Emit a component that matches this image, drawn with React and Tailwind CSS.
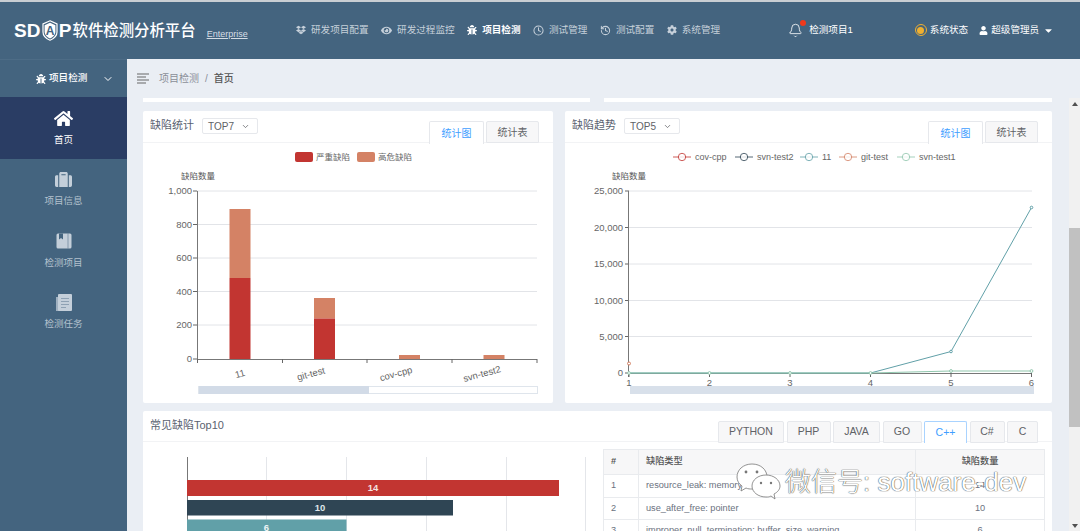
import React from "react";
import { FaBug, FaCaretDown, FaCog, FaDropbox, FaEye, FaHome, FaSuitcase, FaUser } from "react-icons/fa";
import { Bell, ChevronDown, Clock, History } from "lucide-react";

const navItems = [
  { label: "研发项目配置", icon: <FaDropbox size={10} /> },
  { label: "研发过程监控", icon: <FaEye size={11} /> },
  { label: "项目检测", icon: <FaBug size={10} />, active: true },
  { label: "测试管理", icon: <Clock size={11} strokeWidth={2.2} /> },
  { label: "测试配置", icon: <History size={11} strokeWidth={2.2} /> },
  { label: "系统管理", icon: <FaCog size={10} /> },
];

const BookIcon = () => (
  <svg width="16" height="16" viewBox="0 0 16 16">
    <rect x="0.5" y="0.5" width="15" height="15" rx="1.5" fill="#c4cfda" />
    <path d="M3 0.5h4v6l-2-1.5-2 1.5z" fill="#44647f" />
    <rect x="11.5" y="0.5" width="1" height="15" fill="#44647f" opacity="0.5" />
  </svg>
);

const DocIcon = () => (
  <svg width="16" height="17" viewBox="0 0 16 17">
    <rect x="0" y="3" width="3" height="14" fill="#9fb0c0" />
    <rect x="2" y="0" width="14" height="17" rx="1" fill="#c4cfda" />
    <path d="M5 4.5h8M5 7.5h8M5 10.5h8M5 13.5h5" stroke="#8ea1b3" strokeWidth="1" />
  </svg>
);

const sideItems = [
  { label: "首页", icon: <FaHome size={19} />, active: true },
  { label: "项目信息", icon: <FaSuitcase size={17} /> },
  { label: "检测项目", icon: <BookIcon /> },
  { label: "检测任务", icon: <DocIcon /> },
];

function Logo() {
  return (
    <div className="flex items-center text-white">
      <span className="text-[19px] font-bold tracking-[0.2px] leading-none">SD</span>
      <svg width="16" height="21" viewBox="0 0 16 21" className="mx-[1px]">
        <path d="M8 0.8 L15 4 V12 C15 16 11 19 8 20.2 C5 19 1 16 1 12 V4 Z" fill="none" stroke="#fff" strokeWidth="1.2" />
        <path d="M8 2.8 L13.4 5.2 V12 C13.4 15 10.5 17.4 8 18.4 C5.5 17.4 2.6 15 2.6 12 V5.2 Z" fill="#fff" />
        <text x="8" y="15" textAnchor="middle" fontSize="12" fontWeight="700" fill="#44647f">A</text>
      </svg>
      <span className="text-[19px] font-bold leading-none">P</span>
      <span className="ml-[1px] text-[15.4px] font-medium leading-none">软件检测分析平台</span>
      <span className="ml-[11px] mt-[8px] text-[9px] leading-none underline text-[#d5dde5]">Enterprise</span>
    </div>
  );
}

function Header() {
  return (
    <div className="h-[57px] shrink-0 bg-[#44647f] flex items-center pl-[14px]">
      <div className="w-[282px] shrink-0">
        <Logo />
      </div>
      <div className="flex items-center gap-[12.5px]">
        {navItems.map((item) => (
          <div
            key={item.label}
            className={`flex items-center gap-[5px] text-[9.6px] ${item.active ? "text-white font-bold" : "text-[#c6d0da]"}`}
          >
            {item.icon}
            <span>{item.label}</span>
          </div>
        ))}
      </div>
      <div className="ml-[68px] relative flex items-center">
        <Bell size={15} strokeWidth={1.3} className="text-white" />
        <span className="absolute -top-[3px] left-[12px] w-[6px] h-[6px] rounded-full bg-[#f0391c]" />
        <span className="ml-[6px] text-[9.6px] text-white">检测项目1</span>
      </div>
      <div className="ml-[62px] flex items-center text-[9.6px] text-white">
        <span className="w-[12px] h-[12px] rounded-full border border-[#f0b030] flex items-center justify-center mr-[3px]">
          <span className="w-[7px] h-[7px] rounded-full bg-[#f0b030]" />
        </span>
        系统状态
        <FaUser size={9} className="ml-[11px] mr-[3px]" />
        超级管理员
        <FaCaretDown size={11} className="ml-[4px]" />
      </div>
    </div>
  );
}

function Sidebar() {
  return (
    <div className="w-[127px] shrink-0 bg-[#44647f] flex flex-col">
      <div className="h-[38px] flex items-center pl-[36px] text-white text-[9.6px] font-medium border-t border-[#4d6c86]">
        <FaBug size={10} className="mr-[3px]" />
        项目检测
        <ChevronDown size={12} className="ml-[15px]" />
      </div>
      {sideItems.map((item) => (
        <div
          key={item.label}
          className={`h-[61.5px] flex flex-col items-center justify-center gap-[5px] text-[9.5px] ${
            item.active ? "bg-[#2a3d64] text-white" : "text-[#b3c1ce]"
          }`}
        >
          <div className={`h-[19px] flex items-center ${item.active ? "text-white" : "text-[#c4cfda]"}`}>{item.icon}</div>
          <span>{item.label}</span>
        </div>
      ))}
    </div>
  );
}

function CardHeader({ title, top }) {
  return (
    <div className="h-[32px] flex items-start pl-[7px] pr-[14px] border-b border-[#f2f3f5]">
      <span className="mt-[6px] text-[11px] leading-[16px] text-[#5a6270]">{title}</span>
      {top && (
        <div className="mt-[7px] ml-[8px] w-[56px] h-[16px] border border-[#e6e8ec] rounded-[2px] flex items-center justify-between pl-[5px] pr-[7px] text-[10px] text-[#606266]">
          {top}
          <ChevronDown size={9} />
        </div>
      )}
      <div className="ml-auto mt-[10px] flex gap-[2px] text-[10px]">
        <div className="w-[55px] h-[23px] flex items-center justify-center bg-white border border-b-0 border-[#e6e8ec] rounded-t-[2px] text-[#409eff]">
          统计图
        </div>
        <div className="w-[53px] h-[22px] flex items-center justify-center bg-[#f7f7f8] border border-[#e6e8ec] rounded-t-[2px] text-[#606266]">
          统计表
        </div>
      </div>
    </div>
  );
}

const barGrid = [
  [192, "1,000"],
  [225.5, "800"],
  [259, "600"],
  [292.5, "400"],
  [326, "200"],
  [360, "0"],
];

const barData = [
  { x: 229.5, top: 210, split: 279 },
  { x: 314, top: 299, split: 319.5 },
  { x: 399, top: 356, split: 360 },
  { x: 483.5, top: 356, split: 360 },
];

const barLabels = [
  [240, "11"],
  [311, "git-test"],
  [396, "cov-cpp"],
  [482, "svn-test2"],
];

function BarChart() {
  return (
    <svg width="410" height="259" viewBox="143 144 410 259" className="block" fontFamily="Liberation Sans, Noto Sans CJK SC, sans-serif">
      <rect x="295" y="153" width="18" height="10" rx="2" fill="#c23531" />
      <text x="316" y="161" fontSize="8.5" fill="#666">严重缺陷</text>
      <rect x="357" y="153" width="18" height="10" rx="2" fill="#d48265" />
      <text x="378" y="161" fontSize="8.5" fill="#666">高危缺陷</text>
      <text x="181" y="180" fontSize="8.5" fill="#555">缺陷数量</text>
      {barGrid.map(([y, label]) => (
        <g key={label}>
          {label !== "0" && <line x1="197" x2="537" y1={y} y2={y} stroke="#e2e4e8" />}
          <line x1="193" x2="197" y1={y} y2={y} stroke="#666" />
          <text x="192" y={y + 3} textAnchor="end" fontSize="9.5" fill="#666">{label}</text>
        </g>
      ))}
      {barData.map((b) => (
        <g key={b.x}>
          <rect x={b.x} y={b.top} width="21" height={b.split - b.top} fill="#d48265" />
          <rect x={b.x} y={b.split} width="21" height={360 - b.split} fill="#c23531" />
        </g>
      ))}
      <line x1="197.5" x2="197.5" y1="192" y2="363" stroke="#777" />
      <line x1="197" x2="537" y1="360.5" y2="360.5" stroke="#777" />
      {[197.5, 282.5, 367, 452, 537].map((x) => (
        <line key={x} x1={x} x2={x} y1="360" y2="364" stroke="#666" />
      ))}
      {barLabels.map(([x, label]) => (
        <text key={label} x={x} y="378" textAnchor="middle" fontSize="9.5" fill="#666" transform={`rotate(-15 ${x} 375)`}>{label}</text>
      ))}
      <rect x="198.5" y="387.5" width="339" height="7" fill="#fff" stroke="#dfe5ec" />
      <rect x="199" y="387" width="170" height="8" fill="#d2dbe7" />
    </svg>
  );
}

const lineGrid = [
  [192, "25,000"],
  [228.5, "20,000"],
  [265, "15,000"],
  [301.5, "10,000"],
  [337.5, "5,000"],
  [374, "0"],
];

const lineXs = [629, 709.5, 790, 870.5, 951, 1031.5];

const legend = [
  [673, "#c23531", "cov-cpp"],
  [735, "#2f4554", "svn-test2"],
  [800, "#61a0a8", "11"],
  [839, "#d48265", "git-test"],
  [897, "#91c7ae", "svn-test1"],
];

function LineChart() {
  return (
    <svg width="487" height="259" viewBox="565 144 487 259" className="block" fontFamily="Liberation Sans, Noto Sans CJK SC, sans-serif">
      {legend.map(([x, color, label]) => (
        <g key={label}>
          <line x1={x} x2={x + 18} y1="158" y2="158" stroke={color} opacity="0.8" />
          <circle cx={x + 9} cy="158" r="3.7" fill="#fff" stroke={color} opacity="0.8" />
          <text x={x + 22} y="161" fontSize="9" fill="#666">{label}</text>
        </g>
      ))}
      <text x="612" y="180" fontSize="8.5" fill="#555">缺陷数量</text>
      {lineGrid.map(([y, label]) => (
        <g key={label}>
          {label !== "0" && <line x1="629" x2="1032" y1={y} y2={y} stroke="#e2e4e8" />}
          <line x1="625" x2="629" y1={y} y2={y} stroke="#666" />
          <text x="623" y={y + 3} textAnchor="end" fontSize="9.5" fill="#666">{label}</text>
        </g>
      ))}
      <line x1="628.5" x2="628.5" y1="192" y2="378" stroke="#777" />
      <line x1="629" x2="1032" y1="374.5" y2="374.5" stroke="#777" />
      {lineXs.map((x, i) => (
        <g key={x}>
          <line x1={x} x2={x} y1="374" y2="378" stroke="#666" />
          <text x={x} y="387" textAnchor="middle" fontSize="9.5" fill="#666">{i + 1}</text>
        </g>
      ))}
      <polyline points="629,374 709.5,374 790,374 870.5,374 951,352.5 1031.5,208.5" fill="none" stroke="#61a0a8" strokeWidth="1" />
      <polyline points="629,374 709.5,374 790,374 870.5,374 951,372 1031.5,372" fill="none" stroke="#91c7ae" strokeWidth="1.2" />
      <circle cx="629" cy="364.5" r="1.5" fill="#fff" stroke="#d48265" />
      <circle cx="951" cy="352.5" r="1.3" fill="#fff" stroke="#61a0a8" />
      <circle cx="1031.5" cy="208.5" r="1.3" fill="#fff" stroke="#61a0a8" />
      {lineXs.map((x, i) => (
        <circle key={x} cx={x} cy={i > 3 ? 372 : 374} r="1.4" fill="#fff" stroke="#91c7ae" />
      ))}
      <rect x="630" y="387" width="404" height="8" fill="#d8e0ea" />
    </svg>
  );
}

function HBarChart() {
  return (
    <svg width="460" height="110" viewBox="143 442 460 110" className="block shrink-0" fontFamily="Liberation Sans, sans-serif">
      {[266.5, 346.5, 426.5, 506.5, 585.5].map((x) => (
        <line key={x} x1={x} x2={x} y1="457" y2="552" stroke="#e4e6ea" />
      ))}
      <line x1="187.5" x2="187.5" y1="457" y2="552" stroke="#777" />
      <rect x="187" y="480" width="372" height="16" fill="#c23531" />
      <text x="373" y="491" textAnchor="middle" fontSize="9.5" fontWeight="700" fill="#f3e3e2">14</text>
      <rect x="187" y="500" width="266" height="15.5" fill="#2f4554" />
      <text x="320" y="511" textAnchor="middle" fontSize="9.5" fontWeight="700" fill="#dfe5ea">10</text>
      <rect x="187" y="519.5" width="159.5" height="16" fill="#61a0a8" />
      <text x="266.5" y="530.5" textAnchor="middle" fontSize="9.5" fontWeight="700" fill="#eef5f6">6</text>
    </svg>
  );
}

const langTabs = [
  ["PYTHON", "w-[66px]"],
  ["PHP", "w-[44px]"],
  ["JAVA", "w-[47px]"],
  ["GO", "w-[39px]"],
  ["C++", "w-[43px]"],
  ["C#", "w-[35px]"],
  ["C", "w-[31px]"],
];

const rows = [
  ["1", "resource_leak: memory", "14"],
  ["2", "use_after_free: pointer", "10"],
  ["3", "improper_null_termination: buffer_size_warning", "6"],
];

function DefectCard() {
  return (
    <div className="bg-white rounded-t-[2px]">
      <div className="h-[31px] flex items-start pl-[7px] pr-[14px] border-b border-[#f2f3f5]">
        <span className="mt-[6px] text-[11px] leading-[16px] text-[#5a6270]">常见缺陷Top10</span>
        <div className="ml-auto mt-[10px] flex gap-[2.5px] text-[10.5px]">
          {langTabs.map(([label, width]) => (
            <div
              key={label}
              className={`${width} h-[22px] flex items-center justify-center border rounded-t-[2px] ${
                label === "C++" ? "bg-white border-[#a9d3ff] border-b-0 text-[#409eff]" : "bg-[#f7f7f8] border-[#e6e8ec] text-[#606266]"
              }`}
            >
              {label}
            </div>
          ))}
        </div>
      </div>
      <div className="flex">
        <HBarChart />
        <div className="w-[442px] pt-[7px]">
          <table className="w-full table-fixed border-collapse text-[9.2px] text-[#6b7280]">
            <colgroup>
              <col className="w-[35px]" />
              <col className="w-[277px]" />
              <col />
            </colgroup>
            <thead>
              <tr className="h-[25px] bg-[#f7f7f8] text-[#555] font-bold">
                <th className="border border-[#e9ebee] text-left pl-[7px] font-bold">#</th>
                <th className="border border-[#e9ebee] text-left pl-[7px] font-medium">缺陷类型</th>
                <th className="border border-[#e9ebee] text-center font-medium">缺陷数量</th>
              </tr>
            </thead>
            <tbody>
              {rows.map(([no, name, count]) => (
                <tr key={no} className="h-[22.7px]">
                  <td className="border border-[#e9ebee] pl-[7px]">{no}</td>
                  <td className="border border-[#e9ebee] pl-[7px] whitespace-nowrap">{name}</td>
                  <td className="border border-[#e9ebee] text-center">{count}</td>
                </tr>
              ))}
            </tbody>
          </table>
        </div>
      </div>
    </div>
  );
}

function Watermark() {
  return (
    <div className="absolute left-[736px] top-[463px] flex items-center pointer-events-none">
      <svg width="46" height="38" viewBox="0 0 46 38">
        <path d="M16 1 C7 1 1 7 1 14 C1 18 3 21 6 23 L5 28 L10 25 C12 26 14 26 16 26 C25 26 31 20 31 14 C31 7 25 1 16 1Z" fill="#fff" stroke="#777" strokeWidth="0.8" />
        <path d="M30 12 C22 12 16 17 16 23 C16 29 22 34 30 34 C32 34 33 34 35 33 L39 36 L38 31 C42 29 44 26 44 23 C44 17 38 12 30 12Z" fill="#fff" stroke="#777" strokeWidth="0.8" />
        <circle cx="10" cy="9" r="1.4" fill="#777" />
        <circle cx="21" cy="9" r="1.4" fill="#777" />
        <circle cx="25" cy="20" r="1.2" fill="#777" />
        <circle cx="35" cy="20" r="1.2" fill="#777" />
      </svg>
      <span className="ml-[3px] text-[26px] leading-none font-light whitespace-nowrap text-white [text-shadow:0_0_1px_#444,0_0_1px_#444]">
        微信号: software-dev
      </span>
    </div>
  );
}

export default function App() {
  return (
    <div className="relative w-[1080px] h-[531px] overflow-hidden flex flex-col bg-[#eaeef4] font-['Liberation_Sans','Noto_Sans_CJK_SC',sans-serif]">
      <div className="h-[2px] shrink-0 bg-[#c9ced3]" />
      <Header />
      <div className="flex flex-1 min-h-0">
        <Sidebar />
        <div className="flex-1 min-w-0 flex flex-col">
          <div className="h-[39px] shrink-0 flex items-center pl-[10px] text-[10px] text-[#8a8f98]">
            <svg width="13" height="13" viewBox="0 0 13 13" className="mr-[9px]">
              <path d="M0 2h12M0 5h9M0 8h12M0 11h9" stroke="#666" strokeWidth="1.2" />
            </svg>
            <span>项目检测</span>
            <span className="mx-[6px]">/</span>
            <span className="text-[#555] font-medium">首页</span>
          </div>
          <div className="flex flex-1 min-h-0">
            <div className="flex-1 min-w-0 overflow-hidden pl-[16px] pr-[17px]">
              <div className="flex gap-[14px] h-[4px]">
                <div className="w-[447px] bg-white" />
                <div className="flex-1 bg-white" />
              </div>
              <div className="flex gap-[12px] mt-[9px]">
                <div className="w-[410px] h-[292px] bg-white rounded-[2px]">
                  <CardHeader title="缺陷统计" top="TOP7" />
                  <BarChart />
                </div>
                <div className="w-[487px] h-[292px] bg-white rounded-[2px]">
                  <CardHeader title="缺陷趋势" top="TOP5" />
                  <LineChart />
                </div>
              </div>
              <div className="mt-[8px]">
                <DefectCard />
              </div>
            </div>
            <div className="w-[11px] shrink-0 bg-[#f1f1f1] flex flex-col items-center">
              <div className="mt-[4px] w-0 h-0 border-x-[3px] border-x-transparent border-b-[4px] border-b-[#505050]" />
              <div className="mt-[122px] w-full h-[199px] bg-[#c1c1c1]" />
              <div className="mt-auto mb-[3px] w-0 h-0 border-x-[3px] border-x-transparent border-t-[4px] border-t-[#505050]" />
            </div>
          </div>
        </div>
      </div>
      <Watermark />
    </div>
  );
}
